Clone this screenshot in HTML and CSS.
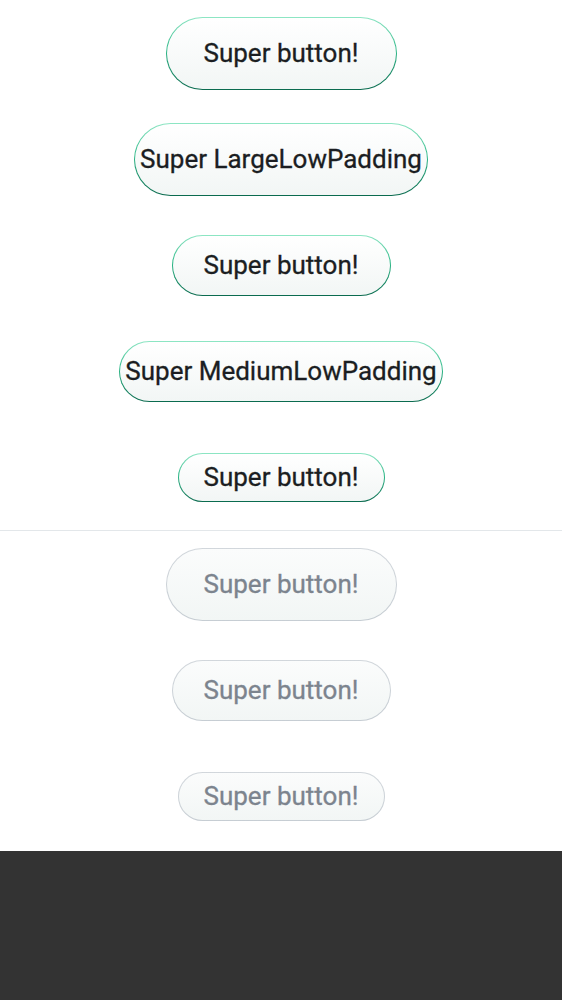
FILE: index.html
```html
<!DOCTYPE html>
<html>
<head>
<meta charset="utf-8">
<link rel="stylesheet" href="styles.css">
</head>
<body>
<div class="page">
  <section class="group">
    <div class="slot"><button class="btn lg">Super button!</button></div>
    <div class="slot"><button class="btn lg low">Super LargeLowPadding</button></div>
    <div class="slot"><button class="btn md">Super button!</button></div>
    <div class="slot"><button class="btn md low">Super MediumLowPadding</button></div>
    <div class="slot"><button class="btn sm">Super button!</button></div>
  </section>
  <hr class="divider">
  <section class="group">
    <div class="slot"><button class="btn lg disabled" disabled>Super button!</button></div>
    <div class="slot"><button class="btn md disabled" disabled>Super button!</button></div>
    <div class="slot"><button class="btn sm disabled" disabled>Super button!</button></div>
  </section>
  <div class="footer"></div>
</div>
</body>
</html>
```
FILE: styles.css
```css
html, body {
  margin: 0;
  padding: 0;
  background: #ffffff;
}
.page {
  display: flex;
  flex-direction: column;
  min-height: 1000px;
}
.group {
  display: flex;
  flex-direction: column;
}
.slot {
  height: 106px;
  display: flex;
  align-items: center;
  justify-content: center;
}
.divider {
  margin: 0;
  border: 0;
  height: 1px;
  background: #e3e7ea;
}
.btn {
  font-family: Roboto, "Liberation Sans", sans-serif;
  font-size: 26px;
  font-weight: 400;
  color: #1b1e22;
  border: 1px solid transparent;
  border-radius: 999px;
  background:
    linear-gradient(180deg, #ffffff 0%, #f2f6f5 100%) padding-box,
    linear-gradient(180deg, #8ee6c4 0%, #2cb887 45%, #0a6a4e 100%) border-box;
  display: inline-flex;
  align-items: center;
  justify-content: center;
  box-sizing: border-box;
  white-space: nowrap;
  cursor: pointer;
  margin: 0;
  -webkit-text-stroke: 0.3px currentColor;
}
.lg { height: 73px; padding: 0 37px; }
.md { height: 61px; padding: 0 31px; }
.sm { height: 49px; padding: 0 25px; }
.lg.low, .md.low { padding: 0 5px; }
.disabled {
  color: #7c848e;
  background:
    linear-gradient(180deg, #fbfcfc 0%, #f2f6f5 100%) padding-box,
    linear-gradient(180deg, #d2d7dc 0%, #c6cdd3 100%) border-box;
  cursor: default;
}
.footer {
  margin-top: 2px;
  flex: 1;
  background: #333333;
}
```
